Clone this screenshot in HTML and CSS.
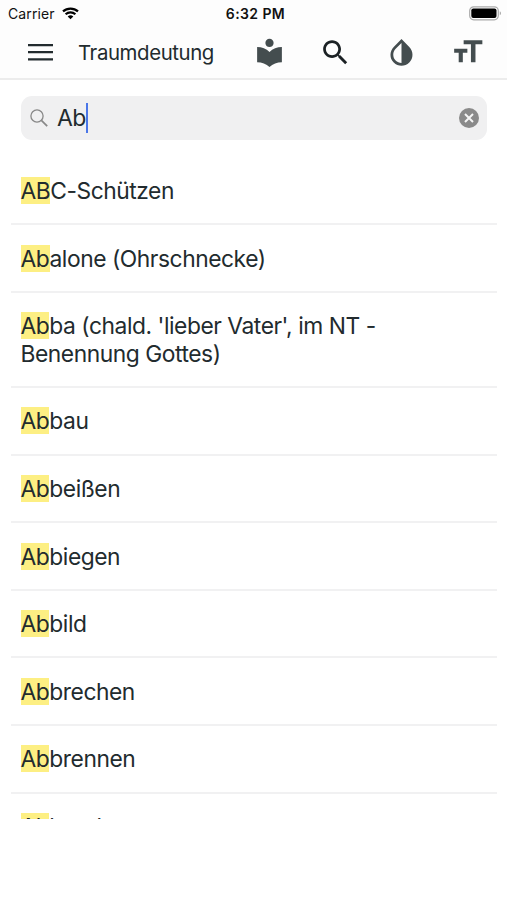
FILE: index.html
```html
<!DOCTYPE html>
<html lang="de">
<head>
    <meta charset="UTF-8">
    <meta name="viewport" content="width=device-width, initial-scale=1.0">
    <title>Traumdeutung</title>
    <link rel="stylesheet" href="styles.css">
</head>
<body>
    <header class="header">
        <!-- Statusleiste -->
        <div class="status-bar">
            <div class="carrier">
                <span class="carrier-name">Carrier</span>
                <svg class="wifi" viewBox="0 0 17 13" width="17" height="13">
                    <path d="M1 4.4C5.2.6 11.8.6 16 4.4M3.6 7.2c2.8-2.5 7-2.5 9.8 0" fill="none" stroke="#000" stroke-width="2.2"/>
                    <path d="M5.7 9.4c1.7-1.4 3.9-1.4 5.6 0L8.5 12.3z"/>
                </svg>
            </div>
            <div class="time">6:32 PM</div>
            <svg class="battery" viewBox="0 0 33 15" width="33" height="15">
                <rect x=".7" y=".8" width="28.6" height="13" rx="4" fill="#fff" stroke="#aaa" stroke-width="1.2"/>
                <rect x="2.3" y="2.5" width="25.2" height="9.6" rx="2"/>
                <path d="M30.8 5.3c1.4.7 1.4 3.3 0 4z" fill="#999"/>
            </svg>
        </div>

        <!-- Navigation -->
        <nav class="toolbar">
            <svg class="menu" viewBox="0 0 25 18" width="25" height="18">
                <path d="M0 1.100h25M0 8.200h25M0 15.300h25" stroke="#222b2e" stroke-width="2.2"/>
            </svg>
            <h1 class="title">Traumdeutung</h1>
            <div class="actions">
                <svg viewBox="0 0 24 24" width="33" height="33" fill="#444d4f">
                    <path d="M12 11.55C9.64 9.35 6.48 8 3 8v11c3.48 0 6.64 1.35 9 3.55 2.36-2.19 5.52-3.55 9-3.55V8c-3.48 0-6.64 1.35-9 3.55zM12 8c1.66 0 3-1.34 3-3s-1.34-3-3-3-3 1.34-3 3 1.34 3 3 3z"/>
                </svg>
                <svg viewBox="0 0 24 24" width="33" height="33" fill="#1b2124">
                    <path d="M15.5 14h-.79l-.28-.27C15.41 12.59 16 11.11 16 9.5 16 5.91 13.09 3 9.5 3S3 5.91 3 9.5 5.91 16 9.5 16c1.61 0 3.09-.59 4.23-1.57l.27.28v.79l5 4.99L20.49 19l-4.99-5zm-6 0C7.01 14 5 11.99 5 9.5S7.01 5 9.5 5 14 7.01 14 9.5 11.99 14 9.5 14z"/>
                </svg>
                <svg viewBox="0 0 24 24" width="33" height="33" fill="#444d4f">
                    <path d="M17.66 7.93L12 2.27 6.34 7.93c-3.12 3.12-3.12 8.19 0 11.31C7.9 20.8 9.95 21.58 12 21.58s4.1-.78 5.66-2.34c3.12-3.12 3.12-8.19 0-11.31zM12 19.59c-1.6 0-3.11-.62-4.24-1.76C6.62 16.69 6 15.19 6 13.59s.62-3.11 1.76-4.24L12 5.1v14.49z"/>
                </svg>
                <svg viewBox="0 0 24 24" width="33" height="33" fill="#444d4f">
                    <path d="M9.2 3v3h5.300v13h3.300V6h5V3zM2.300 12.200h3.300V19h3v-6.800h3.300v-3H2.300z"/>
                </svg>
            </div>
        </nav>
    </header>

    <!-- Suche -->
    <div class="search">
        <svg viewBox="0 0 18 18" width="18" height="18" fill="none" stroke="#888" stroke-width="1.3">
            <circle cx="7" cy="7" r="6.1"/>
            <path d="M11.4 11.4l5.8 5.8" stroke-width="1.7"/>
        </svg>
        <span class="search-text">Ab</span><span class="caret"></span>
        <svg class="clear" viewBox="0 0 20 20" width="20" height="20">
            <circle cx="10" cy="10" r="10" fill="#8a8a8a"/>
            <path d="M6 6l8 8M14 6l-8 8" stroke="#f5f5f5" stroke-width="2"/>
        </svg>
    </div>

    <!-- Ergebnisse -->
    <ul class="results">
        <li><span class="hit">AB</span>C-Schützen</li>
        <li><span class="hit">Ab</span>alone (Ohrschnecke)</li>
        <li><span class="hit">Ab</span>ba (chald. 'lieber Vater', im NT -<br>Benennung Gottes)</li>
        <li><span class="hit">Ab</span>bau</li>
        <li><span class="hit">Ab</span>beißen</li>
        <li><span class="hit">Ab</span>biegen</li>
        <li><span class="hit">Ab</span>bild</li>
        <li><span class="hit">Ab</span>brechen</li>
        <li><span class="hit">Ab</span>brennen</li>
        <li><span class="hit">Ab</span>bruch</li>
    </ul>
</body>
</html>
```
FILE: styles.css
```css
* {
    box-sizing: border-box;
}
body {
    margin: 0;
    height: 900px;
    overflow: hidden;
    background: #fff;
    color: #222b2e;
    font-family: Inter, "Liberation Sans", sans-serif;
}
svg {
    display: block;
    flex: none;
}
.header {
    height: 80px;
    background: #fdfdfd;
    border-bottom: 2px solid #ececec;
}
.status-bar {
    display: grid;
    grid-template-columns: 1fr auto 1fr;
    align-items: center;
    height: 27px;
    padding: 0 5px 0 8px;
    color: #111;
    font-size: 14px;
}
.carrier {
    display: flex;
    align-items: center;
    gap: 7px;
}
.carrier-name {
    width: 47px;
    letter-spacing: 0.1px;
}
.time {
    padding-left: 1px;
    font-weight: 600;
    letter-spacing: 0.4px;
}
.battery {
    justify-self: end;
}
.toolbar {
    display: flex;
    align-items: center;
    height: 51px;
    padding: 0 23px 0 28px;
}
.title {
    margin: 0 0 0 25px;
    width: 148px;
    font-size: 20.4px;
    font-weight: 400;
    letter-spacing: -0.4px;
    white-space: nowrap;
}
.actions {
    display: flex;
    flex: 1;
    justify-content: space-between;
    margin-left: 27px;
}
.search {
    display: flex;
    align-items: center;
    height: 44px;
    margin: 16px 20px 0 21px;
    padding: 0 8px 0 9px;
    background: #f0f0f1;
    border-radius: 11px;
}
.search-text {
    margin-left: 9px;
    font-size: 23px;
    letter-spacing: -0.7px;
}
.caret {
    width: 2px;
    height: 30px;
    background: #4a76e8;
}
.clear {
    margin-left: auto;
}
.results {
    list-style: none;
    height: 661.4px;
    margin: 17.6px 10px 0 11px;
    padding: 0;
    overflow: hidden;
    font-size: 22.8px;
    line-height: 27.7px;
    letter-spacing: -0.45px;
}
.results li {
    padding: 19.4px 10px 18.5px 9.5px;
    border-bottom: 2px solid #f1f1f2;
}
.hit {
    background: #fdef83;
}
```
